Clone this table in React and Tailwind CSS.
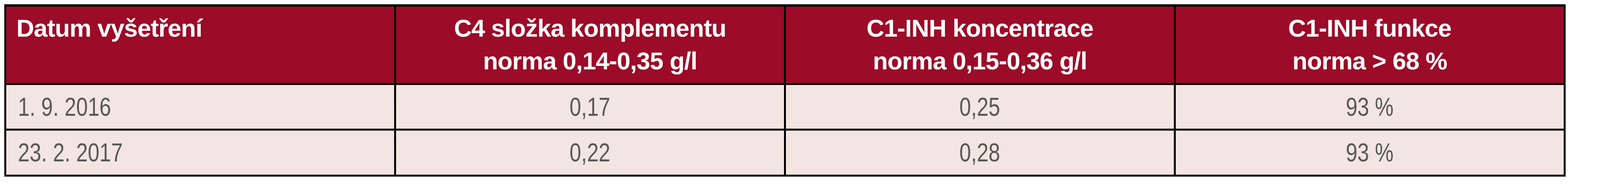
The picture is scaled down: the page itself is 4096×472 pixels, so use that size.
export default function App() {
  const head = [
    { lines: ["Datum vyšetření"], align: "left" },
    { lines: ["C4 složka komplementu", "norma 0,14-0,35 g/l"], align: "center" },
    { lines: ["C1-INH koncentrace", "norma 0,15-0,36 g/l"], align: "center" },
    { lines: ["C1-INH funkce", "norma > 68 %"], align: "center" },
  ];
  const rows = [
    ["1. 9. 2016", "0,17", "0,25", "93 %"],
    ["23. 2. 2017", "0,22", "0,28", "93 %"],
  ];
  return (
    <div className="w-[4096px] h-[472px] bg-white pt-[11px] pl-[11px]">
      <div className="w-[3997px] grid grid-cols-4 gap-[5px] bg-black border-black border-x-[5px] border-t-[6px] border-b-[5px]">
        {head.map((h, i) => (
          <div
            key={i}
            className={
              i === 0
                ? "h-[196px] bg-[#9c0b27] pt-[13px] pl-[26px] text-left text-white font-bold text-[63px] leading-[84px] tracking-[-1px] font-['Liberation_Sans',Arial,sans-serif]"
                : "h-[196px] bg-[#9c0b27] pt-[13px] text-center text-white font-bold text-[63px] leading-[84px] tracking-[-1px] font-['Liberation_Sans',Arial,sans-serif]"
            }
          >
            {h.lines.map((l, j) => (
              <div key={j} className="whitespace-nowrap">{l}</div>
            ))}
          </div>
        ))}
        {rows.map((r, ri) =>
          r.map((c, ci) => (
            <div
              key={ri + "-" + ci}
              className={
                (ri === 0 ? "h-[112px] " : "h-[113px] ") +
                (ci === 0
                  ? "bg-[#f3e5e1] flex items-center justify-start pl-[30px] text-[#585858] text-[67px] font-['Liberation_Sans',Arial,sans-serif]"
                  : "bg-[#f3e5e1] flex items-center justify-center text-[#585858] text-[67px] font-['Liberation_Sans',Arial,sans-serif]")
              }
            >
              <span
                className={
                  ci === 0
                    ? "inline-block whitespace-nowrap scale-x-[0.8] origin-left"
                    : "inline-block whitespace-nowrap scale-x-[0.8] origin-center"
                }
              >
                {c}
              </span>
            </div>
          ))
        )}
      </div>
    </div>
  );
}
